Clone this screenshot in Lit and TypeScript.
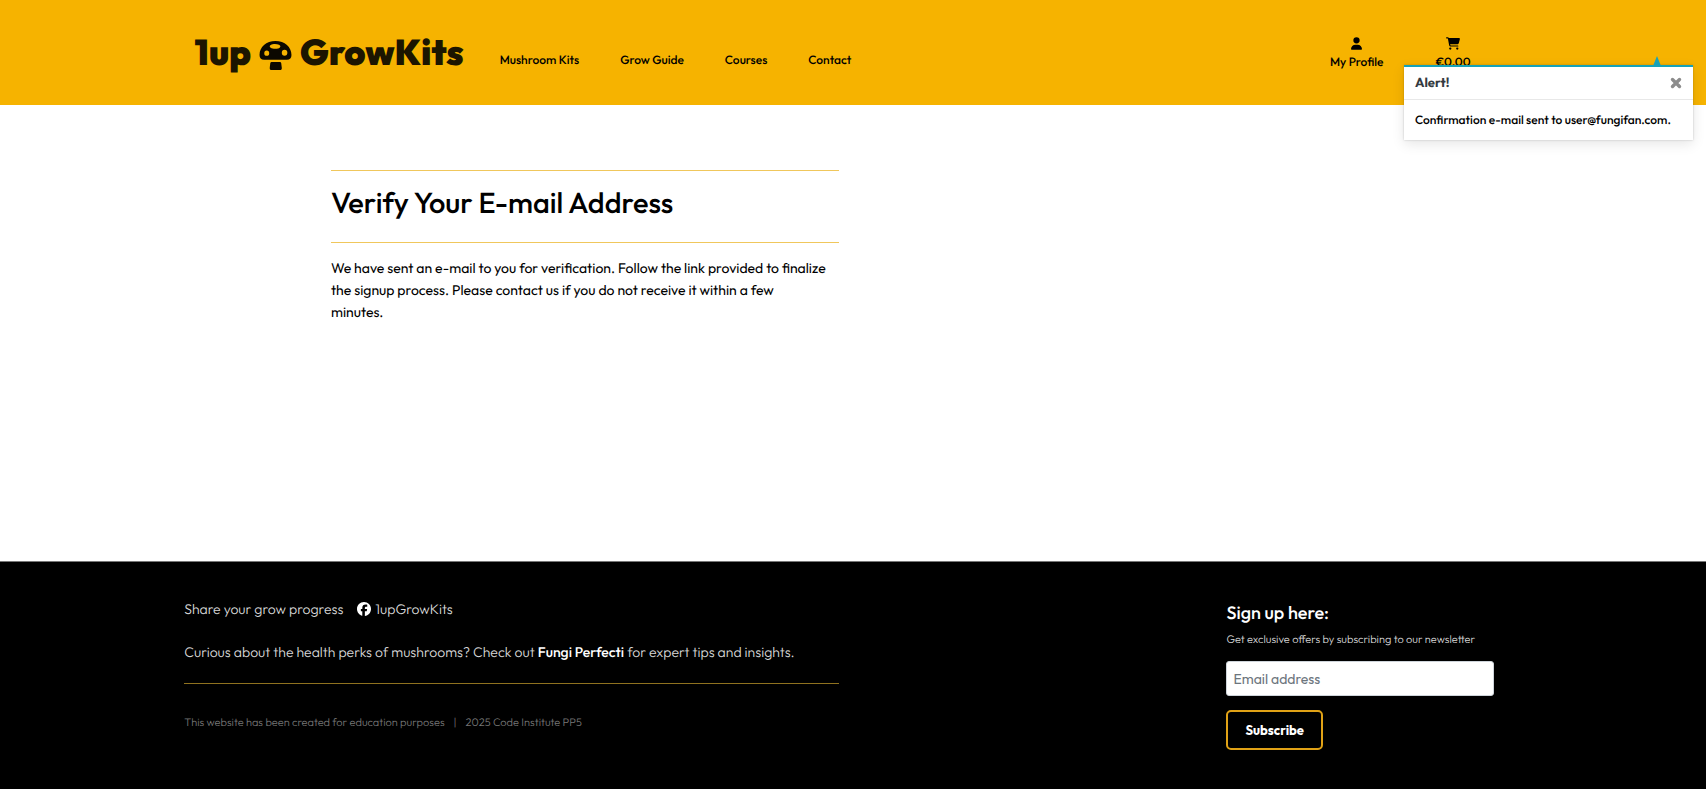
import { LitElement, html, css, svg } from "lit";
import { customElement, state } from "lit/decorators.js";

const userIcon = svg`<svg class="icon user" viewBox="0 0 448 512" aria-hidden="true"><path fill="currentColor" d="M224 256A128 128 0 1 0 224 0a128 128 0 1 0 0 256zm-45.700 48C79.800 304 0 383.800 0 482.300C0 498.700 13.300 512 29.700 512H418.300c16.400 0 29.700-13.300 29.700-29.700C448 383.800 368.200 304 269.700 304H178.300z"/></svg>`;

const cartIcon = svg`<svg class="icon cart" viewBox="0 0 576 512" aria-hidden="true"><path fill="currentColor" d="M0 24C0 10.700 10.700 0 24 0H69.500c22 0 41.500 12.800 50.600 32h411c26.300 0 45.500 25 38.600 50.400l-41 152.300c-8.500 31.400-37 53.300-69.500 53.300H170.700l5.400 28.500c2.200 11.300 12.100 19.500 23.600 19.500H488c13.300 0 24 10.700 24 24s-10.700 24-24 24H199.700c-34.600 0-64.300-24.600-70.700-58.500L77.400 54.500c-.7-3.800-4-6.500-7.900-6.500H24C10.700 48 0 37.300 0 24zM128 464a48 48 0 1 1 96 0 48 48 0 1 1-96 0zm336-48a48 48 0 1 1 0 96 48 48 0 1 1 0-96z"/></svg>`;

const mushroomIcon = svg`<svg class="mushroom" viewBox="0 0 32 30" aria-hidden="true">
  <path fill="#0b0800" fill-rule="evenodd" d="M16 1C7 1 0.500 7 0.500 14.500C0.500 17.500 2 19.200 5 19.200H27C30 19.200 31.500 17.500 31.500 14.500C31.500 7 25 1 16 1ZM11.400 4.800C13.300 3.600 17 3.500 19.400 4.600C21.500 5.600 21 7.600 18.500 8.200C16 8.700 12.800 8.500 11.300 7.500C10 6.600 10.200 5.500 11.400 4.800ZM7.500 10.200A2.400 2.500 0 1 1 7.500 15.200A2.400 2.500 0 1 1 7.500 10.200ZM24.800 9.500A2.700 2.900 0 1 1 24.800 15.300A2.700 2.900 0 1 1 24.800 9.500Z"/>
  <path fill="#0b0800" d="M12 21.300H20.500C21.200 21.300 21.500 22 21.600 22.800L22.100 27C22.200 28.300 21.500 29 20.500 29H12C11 29 10.300 28.300 10.400 27L10.900 22.800C11 22 11.300 21.300 12 21.300Z"/>
</svg>`;

const facebookIcon = svg`<svg class="facebook" viewBox="0 0 512 512" aria-hidden="true"><path fill="currentColor" d="M512 256C512 114.600 397.400 0 256 0S0 114.600 0 256C0 376 82.700 476.800 194.200 504.500V334.200H141.400V256h52.800V222.300c0-87.100 39.400-127.500 125-127.500c16.200 0 44.200 3.200 55.700 6.400V172c-6-.6-16.500-1-29.600-1c-42 0-58.200 15.900-58.200 57.200V256h83.600l-14.400 78.200H287V510.100C413.800 494.800 512 386.900 512 256z"/></svg>`;

const closeIcon = svg`<svg class="cross" viewBox="0 0 12 12" aria-hidden="true"><path d="M2.500 2.500L9.500 9.500M9.500 2.500L2.500 9.500" stroke="currentColor" stroke-width="3.400" stroke-linecap="round"/></svg>`;

@customElement("app-root")
export class AppRoot extends LitElement {
  @state() private alertOpen = true;

  static styles = css`
    :host {
      display: flex;
      flex-direction: column;
      min-height: 100vh;
      box-sizing: border-box;
      background: #fff;
      color: #000;
      font-family: Outfit, Lato, "Open Sans", sans-serif;
      font-size: 14px;
      font-weight: 400;
      line-height: 22px;
      text-rendering: geometricPrecision;
    }
    * { box-sizing: border-box; }
    a { color: inherit; text-decoration: none; }
    h1, h2, p, ul { margin: 0; padding: 0; }
    hr {
      width: 100%;
      height: 1px;
      margin: 0;
      border: 0;
      background: #f0c75c;
    }
    header {
      display: flex;
      align-items: flex-start;
      height: 105px;
      padding: 31px 13.800% 0 11.400%;
      background: #f6b300;
    }
    .brand {
      display: flex;
      align-items: center;
      gap: 8px;
      color: #1c1500;
      font-size: 36px;
      font-weight: 900;
      line-height: 44px;
    }
    .mushroom { width: 33px; height: 31px; margin-top: 4px; }
    .menu {
      display: flex;
      gap: 41px;
      margin-left: 36px;
      padding-top: 19px;
      list-style: none;
      font-size: 12px;
      font-weight: 500;
      line-height: 22px;
    }
    .account {
      display: flex;
      gap: 52px;
      margin-left: auto;
      font-size: 12px;
      font-weight: 500;
      line-height: 18px;
    }
    .account a {
      display: flex;
      flex-direction: column;
      align-items: center;
      gap: 4px;
      padding-top: 6px;
    }
    .icon { height: 13px; }
    .user { width: 11px; }
    .cart { width: 14px; }
    main {
      flex: 1;
      padding: 65px 50.800% 40px 19.400%;
    }
    h1 {
      padding: 14px 0 21px;
      font-size: 29px;
      font-weight: 500;
      line-height: 36px;
    }
    .note { padding-top: 14px; }
    footer {
      display: flex;
      justify-content: space-between;
      padding: 36px 12.400% 39px 10.800%;
      border-top: 1px solid #777;
      background: #000;
      color: #d8d8d8;
      font-weight: 300;
    }
    .info { width: 50%; }
    .share { display: flex; align-items: center; gap: 14px; padding-bottom: 21px; }
    .share a { display: flex; align-items: center; gap: 4px; }
    .facebook { width: 14px; height: 14px; color: #fff; }
    .perks { padding-bottom: 20px; }
    .perks a { color: #fff; font-weight: 500; }
    .info hr { background: #8f721f; }
    .legal {
      display: flex;
      gap: 9px;
      padding-top: 27px;
      color: #777;
      font-size: 11px;
    }
    .signup {
      display: flex;
      flex-direction: column;
      align-items: flex-start;
      width: 268px;
      padding-top: 4px;
    }
    h2 { color: #fff; font-size: 18px; font-weight: 500; line-height: 22px; }
    .signup label { padding: 4px 0 11px; font-size: 11px; }
    input {
      width: 100%;
      height: 35px;
      padding: 0 6px;
      border: 1px solid #ced4da;
      border-radius: 3px;
      background: #fff;
      font: inherit;
      font-weight: 400;
    }
    input::placeholder { color: #6c757d; opacity: 1; }
    .subscribe {
      height: 40px;
      margin-top: 14px;
      padding: 0 17px;
      border: 2px solid #e0a216;
      border-radius: 5px;
      background: #000;
      color: #fff;
      font: inherit;
      font-size: 13px;
      font-weight: 700;
    }
    .toast {
      position: absolute;
      top: 65px;
      right: 13px;
      width: 289px;
      border-top: 2px solid #17a2b8;
      background: #fff;
      box-shadow: 0 4px 12px rgba(0, 0, 0, 0.100), 0 0 2px rgba(0, 0, 0, 0.200);
    }
    .arrow {
      position: absolute;
      top: -11px;
      right: 32px;
      border: 4px solid transparent;
      border-top: 0;
      border-bottom: 10px solid #17a2b8;
    }
    .toast-head {
      display: flex;
      align-items: center;
      justify-content: space-between;
      height: 33px;
      padding: 0 11px;
      border-bottom: 1px solid #e8e8e8;
      color: #343a40;
      font-size: 13px;
    }
    .toast-head strong { font-weight: 700; }
    .close {
      display: flex;
      padding: 0;
      border: 0;
      background: none;
      color: #8c8c8c;
    }
    .cross { width: 12px; height: 12px; }
    .toast-body {
      padding: 10px 11px 8px;
      font-size: 12px;
      font-weight: 500;
      white-space: nowrap;
    }
  `;

  render() {
    return html`
      <header>
        <a class="brand" href="#"><span>1up</span>${mushroomIcon}<span>GrowKits</span></a>
        <nav aria-label="Main">
          <ul class="menu">
            ${["Mushroom Kits", "Grow Guide", "Courses", "Contact"].map(
              (item) => html`<li><a href="#">${item}</a></li>`
            )}
          </ul>
        </nav>
        <div class="account">
          <a href="#">${userIcon}<span>My Profile</span></a>
          <a href="#">${cartIcon}<span>€0.00</span></a>
        </div>
      </header>
      ${this.alertOpen
        ? html`<div class="toast" role="alert">
            <span class="arrow"></span>
            <div class="toast-head">
              <strong>Alert!</strong>
              <button class="close" aria-label="Close" @click=${() => (this.alertOpen = false)}>${closeIcon}</button>
            </div>
            <p class="toast-body">Confirmation e-mail sent to user@fungifan.com.</p>
          </div>`
        : null}
      <main>
        <hr />
        <h1>Verify Your E-mail Address</h1>
        <hr />
        <p class="note">We have sent an e-mail to you for verification. Follow the link provided to finalize the signup process. Please contact us if you do not receive it within a few<br />minutes.</p>
      </main>
      <footer>
        <div class="info">
          <p class="share"><span>Share your grow progress</span><a href="#">${facebookIcon}<span>1upGrowKits</span></a></p>
          <p class="perks">Curious about the health perks of mushrooms? Check out <a href="#">Fungi Perfecti</a> for expert tips and insights.</p>
          <hr />
          <p class="legal"><span>This website has been created for education purposes</span><span>|</span><span>2025 Code Institute PP5</span></p>
        </div>
        <form class="signup" @submit=${(e: Event) => e.preventDefault()}>
          <h2>Sign up here:</h2>
          <label for="email">Get exclusive offers by subscribing to our newsletter</label>
          <input id="email" type="email" placeholder="Email address" />
          <button class="subscribe" type="submit">Subscribe</button>
        </form>
      </footer>
    `;
  }
}
